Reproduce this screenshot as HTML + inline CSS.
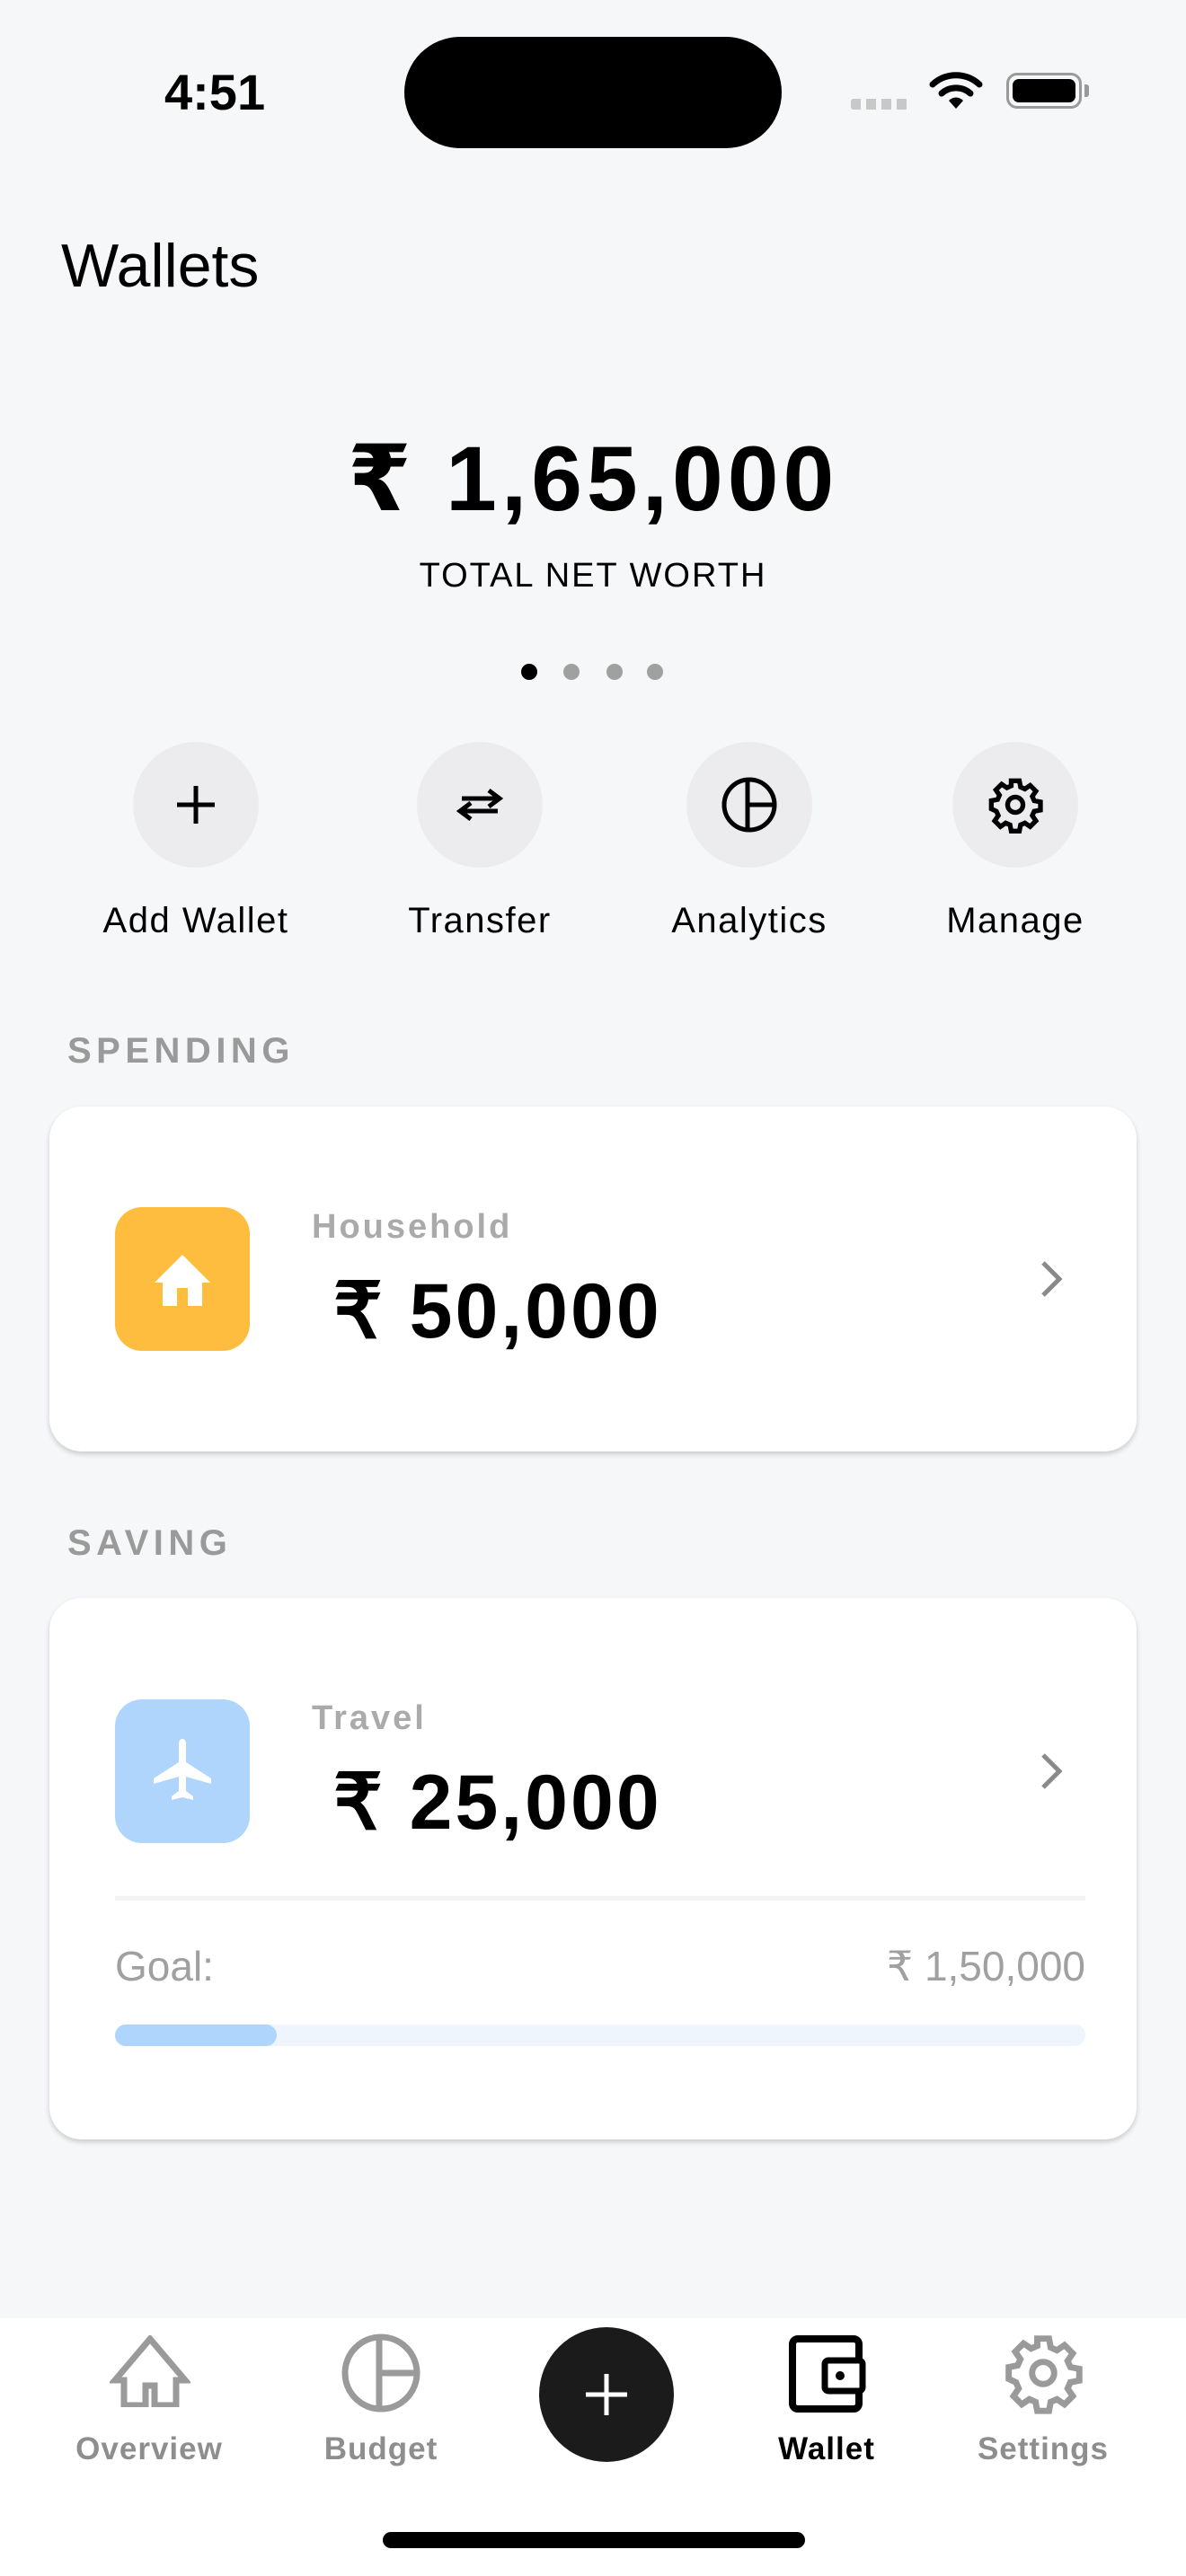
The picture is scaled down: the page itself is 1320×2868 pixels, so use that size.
<!DOCTYPE html>
<html><head><meta charset="utf-8"><style>
*{margin:0;padding:0;box-sizing:border-box}
body{width:1320px;height:2868px;background:#f6f7f9;position:relative;overflow:hidden;font-family:"Liberation Sans",sans-serif;color:#000}
.a{position:absolute}
.c{text-align:center}
.circ{position:absolute;width:140px;height:140px;border-radius:50%;background:#ececee;display:flex;align-items:center;justify-content:center}
.lbl{position:absolute;width:300px;text-align:center;font-size:40px;letter-spacing:1.5px;top:1003px}
.sec{position:absolute;left:75px;font-size:40px;font-weight:bold;color:#9a9a9a;letter-spacing:5.5px}
.card{position:absolute;left:55px;width:1210px;background:#fff;border-radius:36px;box-shadow:0 3px 6px rgba(0,0,0,.18)}
.icon{position:absolute;left:73px;width:150px;height:160px;border-radius:30px;display:flex;align-items:center;justify-content:center}
.nm{position:absolute;left:292px;font-size:38px;font-weight:bold;color:#aaa;letter-spacing:3px}
.amt{position:absolute;left:316px;font-size:86px;font-weight:bold;letter-spacing:3px}
.tab{position:absolute;width:240px;text-align:center;font-size:35px;font-weight:bold;color:#8e8e8e;top:2707px;letter-spacing:1px}
</style></head><body>
<div class="a" style="left:183px;top:70px;font-size:56px;font-weight:bold">4:51</div>
<div class="a" style="left:450px;top:41px;width:420px;height:124px;border-radius:62px;background:#000"></div>
<div class="a" style="left:947px;top:110px;width:64px;height:12px;background:repeating-linear-gradient(90deg,#c8c8c8 0 11px,transparent 11px 17px);border-radius:3px"></div>
<svg class="a" style="left:1034px;top:78px" width="60" height="46" viewBox="0 0 60 46"><path d="M4 16 A38 38 0 0 1 56 16" fill="none" stroke="#000" stroke-width="7" stroke-linecap="round"/><path d="M14 26 A24 24 0 0 1 46 26" fill="none" stroke="#000" stroke-width="7" stroke-linecap="round"/><path d="M22 34 L30 43 L38 34 A11 11 0 0 0 22 34Z" fill="#000"/></svg>
<div class="a" style="left:1120px;top:81px;width:84px;height:40px;border:3px solid #999;border-radius:12px;padding:4px"><div style="width:100%;height:100%;background:#000;border-radius:7px"></div></div>
<div class="a" style="left:1207px;top:94px;width:5px;height:14px;background:#999;border-radius:0 3px 3px 0"></div>

<div class="a" style="left:68px;top:257px;font-size:68px">Wallets</div>
<div class="a c" style="left:0;width:1320px;top:474px;font-size:102px;font-weight:bold;letter-spacing:5px;font-family:'Liberation Sans','DejaVu Sans',sans-serif">₹ 1,65,000</div>
<div class="a c" style="left:0;width:1320px;top:620px;font-size:38px;letter-spacing:2px">TOTAL NET WORTH</div>
<div class="a" style="left:580px;top:739px;width:18px;height:18px;border-radius:50%;background:#000"></div>
<div class="a" style="left:627px;top:739px;width:18px;height:18px;border-radius:50%;background:#a0a0a0"></div>
<div class="a" style="left:675px;top:739px;width:18px;height:18px;border-radius:50%;background:#a0a0a0"></div>
<div class="a" style="left:720px;top:739px;width:18px;height:18px;border-radius:50%;background:#a0a0a0"></div>

<div class="circ" style="left:148px;top:826px"><svg width="50" height="50"><path d="M25 4V46M4 25H46" stroke="#000" stroke-width="5"/></svg></div>
<div class="circ" style="left:464px;top:826px"><svg width="60" height="50"><path d="M10 18H50M40 9L52 18L40 27" fill="none" stroke="#000" stroke-width="5"/><path d="M50 32H10M20 23L8 32L20 41" fill="none" stroke="#000" stroke-width="5"/></svg></div>
<div class="circ" style="left:764px;top:826px"><svg width="64" height="64"><circle cx="32" cy="32" r="28" fill="none" stroke="#000" stroke-width="5"/><path d="M30 4V60M30 32H60" stroke="#000" stroke-width="5"/></svg></div>
<div class="circ" style="left:1060px;top:826px"><svg width="64" height="64" viewBox="0 0 24 24"><path fill="none" stroke="#000" stroke-width="2" d="M10.3 2h3.4l.5 2.6 1.8.8 2.2-1.5 2.4 2.4-1.5 2.2.8 1.8 2.6.5v3.4l-2.6.5-.8 1.8 1.5 2.2-2.4 2.4-2.2-1.5-1.8.8-.5 2.6h-3.4l-.5-2.6-1.8-.8-2.2 1.5-2.4-2.4 1.5-2.2-.8-1.8L2 13.7v-3.4l2.6-.5.8-1.8-1.5-2.2 2.4-2.4 2.2 1.5 1.8-.8z"/><circle cx="12" cy="12" r="3.2" fill="none" stroke="#000" stroke-width="2"/></svg></div>
<div class="lbl" style="left:68px">Add Wallet</div>
<div class="lbl" style="left:384px">Transfer</div>
<div class="lbl" style="left:684px">Analytics</div>
<div class="lbl" style="left:980px">Manage</div>

<div class="sec" style="top:1148px">SPENDING</div>
<div class="card" style="top:1232px;height:384px">
 <div class="icon" style="top:112px;background:#ffbd3f"><svg width="70" height="66" viewBox="0 0 70 66"><path d="M35 6L4 37H13V63H29V43H41V63H57V37H66Z" fill="#fff"/></svg></div>
 <div class="nm" style="top:113px">Household</div>
 <div class="amt" style="top:178px">₹ 50,000</div>
 <svg class="a" style="left:1100px;top:170px" width="30" height="44"><path d="M6 4L24 22L6 40" fill="none" stroke="#8a8a8a" stroke-width="5"/></svg>
</div>

<div class="sec" style="top:1696px">SAVING</div>
<div class="card" style="top:1779px;height:603px">
 <div class="icon" style="top:113px;background:#b0d5fc"><svg width="70" height="76" viewBox="0 0 70 76"><path d="M35 2c3 0 4 3 4 6v20l28 18v6l-28-8v16l8 6v4l-12-3-12 3v-4l8-6V44l-28 8v-6l28-18V8c0-3 1-6 4-6z" fill="#fff"/></svg></div>
 <div class="nm" style="top:113px">Travel</div>
 <div class="amt" style="top:178px">₹ 25,000</div>
 <svg class="a" style="left:1100px;top:171px" width="30" height="44"><path d="M6 4L24 22L6 40" fill="none" stroke="#8a8a8a" stroke-width="5"/></svg>
 <div class="a" style="left:73px;top:332px;width:1080px;height:5px;background:#f2f2f2"></div>
 <div class="a" style="left:73px;top:383px;font-size:46px;color:#a0a0a0">Goal:</div>
 <div class="a" style="right:57px;top:383px;font-size:46px;color:#a0a0a0;font-family:'Liberation Sans','DejaVu Sans',sans-serif">₹ 1,50,000</div>
 <div class="a" style="left:73px;top:475px;width:1080px;height:24px;border-radius:12px;background:#eef5fd"><div style="width:180px;height:100%;border-radius:12px;background:#b0d5fc"></div></div>
</div>

<div class="a" style="left:0;top:2581px;width:1320px;height:287px;background:#fff"></div>
<svg class="a" style="left:122px;top:2600px" width="90" height="80" viewBox="0 0 90 80"><path d="M45 4L6 50H16V78H40V56H50V78H74V50H84Z" fill="none" stroke="#9a9a9a" stroke-width="7" stroke-linejoin="miter"/></svg>
<svg class="a" style="left:378px;top:2596px" width="92" height="92"><circle cx="46" cy="46" r="40" fill="none" stroke="#9a9a9a" stroke-width="7"/><path d="M44 6V86M44 46H86" stroke="#9a9a9a" stroke-width="7"/></svg>
<div class="a" style="left:600px;top:2591px;width:150px;height:150px;border-radius:50%;background:#1b1b1b"></div>
<svg class="a" style="left:650px;top:2641px" width="50" height="50"><path d="M25 2V48M2 25H48" stroke="#fff" stroke-width="5"/></svg>
<svg class="a" style="left:878px;top:2600px" width="86" height="86" viewBox="0 0 86 86"><rect x="4" y="4" width="74" height="78" rx="6" fill="none" stroke="#000" stroke-width="8"/><rect x="40" y="28" width="42" height="34" rx="4" fill="#fff" stroke="#000" stroke-width="7"/><circle cx="57" cy="45" r="5" fill="#000"/></svg>
<svg class="a" style="left:1115px;top:2596px" width="92" height="92" viewBox="0 0 24 24"><path fill="none" stroke="#9a9a9a" stroke-width="1.8" d="M10.3 2h3.4l.5 2.6 1.8.8 2.2-1.5 2.4 2.4-1.5 2.2.8 1.8 2.6.5v3.4l-2.6.5-.8 1.8 1.5 2.2-2.4 2.4-2.2-1.5-1.8.8-.5 2.6h-3.4l-.5-2.6-1.8-.8-2.2 1.5-2.4-2.4 1.5-2.2-.8-1.8L2 13.7v-3.4l2.6-.5.8-1.8-1.5-2.2 2.4-2.4 2.2 1.5 1.8-.8z"/><circle cx="12" cy="12" r="3.2" fill="none" stroke="#9a9a9a" stroke-width="1.8"/></svg>
<div class="tab" style="left:46px">Overview</div>
<div class="tab" style="left:304px">Budget</div>
<div class="tab" style="left:800px;color:#000">Wallet</div>
<div class="tab" style="left:1041px">Settings</div>
<div class="a" style="left:426px;top:2819px;width:470px;height:18px;border-radius:9px;background:#000"></div>
</body></html>
